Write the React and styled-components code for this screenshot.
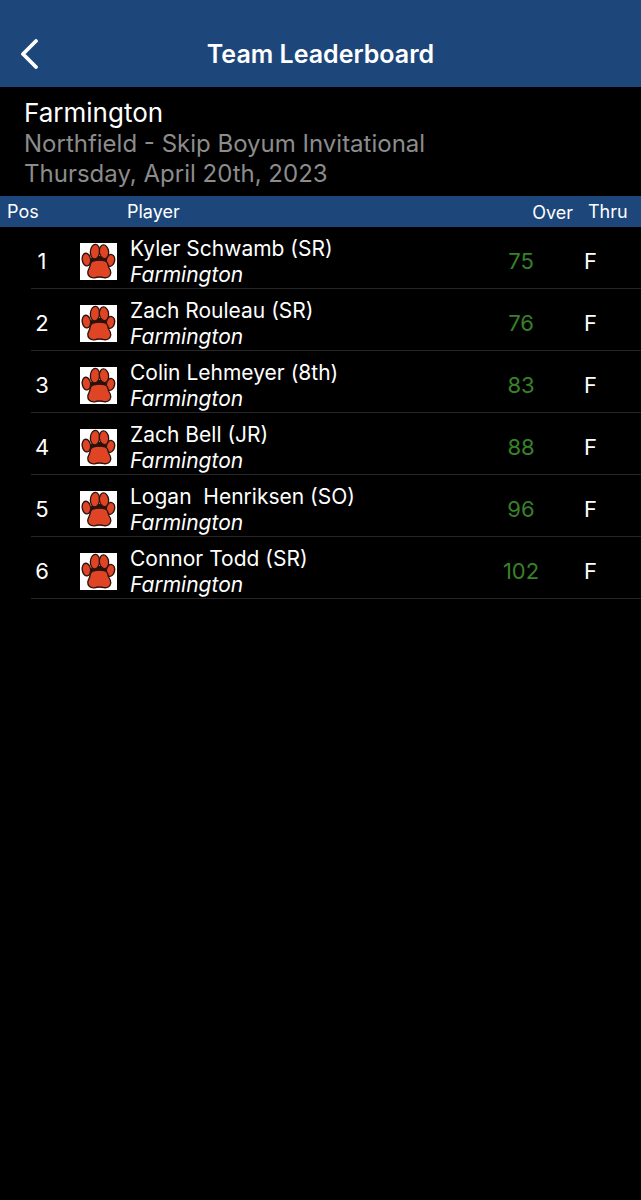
import React from "react";
import styled, { createGlobalStyle } from "styled-components";

const GlobalStyle = createGlobalStyle`
  *, *::before, *::after { box-sizing: border-box; }
  body {
    margin: 0;
    background: #000;
    color: #fff;
    font-family: Inter, "Liberation Sans", sans-serif;
  }
`;

const Screen = styled.div`
  min-height: 100vh;
  background: #000;
`;

const TopBar = styled.header`
  display: grid;
  grid-template-columns: 60px 1fr 60px;
  align-items: center;
  padding: 20px 0 0;
  height: 87px;
  background: #1d467b;
`;

const BackButton = styled.button`
  display: flex;
  align-items: center;
  height: 48px;
  padding: 0 0 0 20px;
  border: 0;
  background: none;
  color: #fff;
  cursor: pointer;
`;

const Title = styled.h1`
  margin: 0;
  font-size: 25px;
  line-height: 32px;
  font-weight: 600;
  text-align: center;
`;

const Summary = styled.section`
  padding: 9px 24px 7px;
`;

const TeamName = styled.h2`
  margin: 0;
  font-size: 26px;
  line-height: 33px;
  font-weight: 400;
`;

const EventLine = styled.p`
  margin: 0;
  font-size: 24px;
  line-height: 30px;
  color: #8c8c8c;
`;

const Board = styled.table`
  width: 100%;
  table-layout: fixed;
  border-collapse: collapse;
`;

const Column = styled.col`
  width: ${({ $width }) => $width || "auto"};
`;

const HeadRow = styled.tr`
  height: 31px;
  background: #1d467b;
`;

const HeadCell = styled.th`
  padding: ${({ $pad }) => $pad};
  font-size: 18px;
  line-height: 22px;
  font-weight: 400;
  text-align: ${({ $align }) => $align || "left"};
  vertical-align: top;
`;

const Row = styled.tr`
  height: 62px;
  background: linear-gradient(#262626, #262626) right bottom / calc(100% - 31px) 1px no-repeat;
`;

const Cell = styled.td`
  padding: ${({ $pad }) => $pad || "5px 0 0"};
  font-size: 22px;
  line-height: 26px;
  text-align: ${({ $align }) => $align || "left"};
  color: ${({ $color }) => $color || "#fff"};
`;

const Player = styled.div`
  display: flex;
  align-items: center;
  gap: 13px;
`;

const Logo = styled.svg`
  flex: none;
  width: 37px;
  height: 37px;
  background: #fff;
`;

const Name = styled.div`
  font-size: 21px;
  line-height: 26px;
  white-space: pre;
`;

const School = styled(Name)`
  font-style: italic;
`;

const players = [
  { pos: 1, name: "Kyler Schwamb (SR)", over: 75 },
  { pos: 2, name: "Zach Rouleau (SR)", over: 76 },
  { pos: 3, name: "Colin Lehmeyer (8th)", over: 83 },
  { pos: 4, name: "Zach Bell (JR)", over: 88 },
  { pos: 5, name: "Logan  Henriksen (SO)", over: 96 },
  { pos: 6, name: "Connor Todd (SR)", over: 102 },
];

function PawLogo() {
  return (
    <Logo viewBox="0 0 37 37" aria-hidden="true">
      <path
        d="M9 18 L13 13 L24 13 L28 18 L26 22 L11 22 Z"
        fill="#2a130d"
      />
      <g fill="#df4425" stroke="#2a130d" strokeWidth="1.3">
        <ellipse cx="6.4" cy="16.6" rx="4.2" ry="6.4" transform="rotate(-8 6.4 16.6)" />
        <ellipse cx="30.5" cy="17.4" rx="4.1" ry="6" transform="rotate(12 30.5 17.4)" />
        <ellipse cx="15" cy="8.6" rx="4.6" ry="7.3" transform="rotate(5 15 8.6)" />
        <ellipse cx="24" cy="8.8" rx="4.6" ry="6.9" transform="rotate(-7 24 8.8)" />
        <path d="M13 18 C16 17.2 22.5 17.2 25.6 18 C27.8 19 28 21.6 28.6 24 C30 26 31 27.6 30.8 30 C30.2 34 27 35.2 24 34.6 C21 33.8 17.5 33.8 14.5 34.8 C10.5 35.2 7.4 33 7.8 29 C8 26.8 9.8 25 10 22.6 C10.2 20.6 11 18.8 13 18 Z" />
      </g>
    </Logo>
  );
}

export default function App() {
  return (
    <Screen>
      <GlobalStyle />
      <TopBar>
        <BackButton type="button" aria-label="Back">
          <svg width="20" height="30" viewBox="0 0 20 30" fill="none" stroke="currentColor" strokeWidth="3.8" strokeLinecap="round" strokeLinejoin="round">
            <path d="M16 2 L3 15 L16 28" />
          </svg>
        </BackButton>
        <Title>Team Leaderboard</Title>
      </TopBar>
      <main>
        <Summary>
          <TeamName>Farmington</TeamName>
          <EventLine>Northfield - Skip Boyum Invitational</EventLine>
          <EventLine>Thursday, April 20th, 2023</EventLine>
        </Summary>
        <Board>
          <colgroup>
            <Column $width="80px" />
            <Column />
            <Column $width="120px" />
            <Column $width="60px" />
          </colgroup>
          <thead>
            <HeadRow>
              <HeadCell scope="col" $pad="5px 0 0 7px">Pos</HeadCell>
              <HeadCell scope="col" $pad="5px 0 0 47px">Player</HeadCell>
              <HeadCell scope="col" $pad="6px 8px 0 0" $align="right">Over</HeadCell>
              <HeadCell scope="col" $pad="5px 0 0 7px">Thru</HeadCell>
            </HeadRow>
          </thead>
          <tbody>
            {players.map((p) => (
              <Row key={p.pos}>
                <Cell $align="center" $pad="5px 0 0 4px">{p.pos}</Cell>
                <Cell $pad="7px 0 0">
                  <Player>
                    <PawLogo />
                    <div>
                      <Name>{p.name}</Name>
                      <School>Farmington</School>
                    </div>
                  </Player>
                </Cell>
                <Cell $align="center" $color="#38812a">{p.over}</Cell>
                <Cell $pad="5px 0 0 3px">F</Cell>
              </Row>
            ))}
          </tbody>
        </Board>
      </main>
    </Screen>
  );
}
